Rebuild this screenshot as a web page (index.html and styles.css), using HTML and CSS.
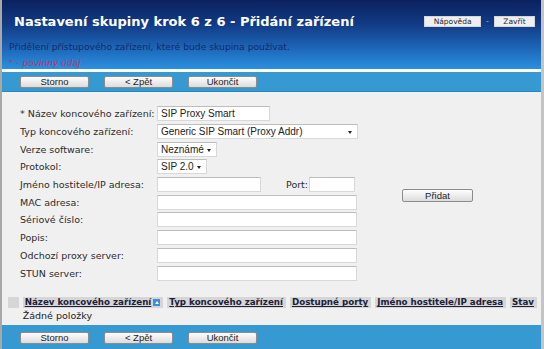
FILE: index.html
```html
<!DOCTYPE html>
<html lang="cs">

<head>
    <meta charset="UTF-8" />
    <title>Nastavení skupiny krok 6 z 6</title>
    <link rel="stylesheet" href="styles.css">
</head>

<body>
    <div class="page">
        <!-- Wizard header -->
        <div class="head">
            <div class="head-top">
                <h1>Nastavení skupiny krok 6 z 6 - Přidání zařízení</h1>
                <div class="head-links">
                    <button class="link-btn">Nápověda</button>
                    <span class="sep">-</span>
                    <button class="link-btn">Zavřít</button>
                </div>
            </div>
            <p class="intro">Přidělení přístupového zařízení, které bude skupina používat.</p>
            <p class="req">* - povinný údaj</p>
        </div>

        <!-- Navigation bar -->
        <div class="toolbar">
            <button class="btn">Storno</button>
            <button class="btn">&lt; Zpět</button>
            <button class="btn">Ukončit</button>
        </div>

        <div class="content">
            <div class="form-wrap">
                <div class="form-grid">
                    <label>* Název koncového zařízení:</label>
                    <div class="field"><input class="inp w-name" type="text" value="SIP Proxy Smart"></div>

                    <label>Typ koncového zařízení:</label>
                    <div class="field"><span class="sel w-type">Generic SIP Smart (Proxy Addr)</span></div>

                    <label>Verze software:</label>
                    <div class="field"><span class="sel w-ver">Neznámé</span></div>

                    <label>Protokol:</label>
                    <div class="field"><span class="sel w-proto">SIP 2.0</span></div>

                    <label>Jméno hostitele/IP adresa:</label>
                    <div class="field">
                        <input class="inp w-host" type="text">
                        <span class="port-label">Port:</span>
                        <input class="inp w-port" type="text">
                    </div>

                    <label>MAC adresa:</label>
                    <div class="field"><input class="inp w-full" type="text"></div>

                    <label>Sériové číslo:</label>
                    <div class="field"><input class="inp w-full" type="text"></div>

                    <label>Popis:</label>
                    <div class="field"><input class="inp w-full" type="text"></div>

                    <label>Odchozí proxy server:</label>
                    <div class="field"><input class="inp w-full" type="text"></div>

                    <label>STUN server:</label>
                    <div class="field"><input class="inp w-full" type="text"></div>
                </div>

                <div class="add-col">
                    <button class="btn add">Přidat</button>
                </div>
            </div>

            <!-- Assigned devices -->
            <table class="list">
                <thead>
                    <tr>
                        <th class="blank"></th>
                        <th class="c-name"><a>Název koncového zařízení</a><span class="sort"></span></th>
                        <th class="c-type"><a>Typ koncového zařízení</a></th>
                        <th class="c-ports"><a>Dostupné porty</a></th>
                        <th class="c-host"><a>Jméno hostitele/IP adresa</a></th>
                        <th class="c-state"><a>Stav</a></th>
                    </tr>
                </thead>
                <tbody>
                    <tr>
                        <td></td>
                        <td colspan="5" class="empty">Žádné položky</td>
                    </tr>
                </tbody>
            </table>
        </div>

        <div class="toolbar bottom">
            <button class="btn">Storno</button>
            <button class="btn">&lt; Zpět</button>
            <button class="btn">Ukončit</button>
        </div>
    </div>
</body>

</html>
```

FILE: styles.css
```css
/* General styling */
body {
    margin: 0;
    font-family: "DejaVu Sans", Verdana, sans-serif;
    background-color: #f1f0f0;
}

.page {
    width: 544px;
    height: 349px;
    box-sizing: border-box;
    border-left: 2px solid #a8a8a8;
    border-right: 3px solid #c4c4c4;
    display: flex;
    flex-direction: column;
    overflow: hidden;
}

/* Header */
.head {
    height: 72px;
    box-sizing: border-box;
    padding: 0 0 0 8px;
    background: linear-gradient(to bottom, #0b215e 0%, #123b85 35%, #1d66b8 70%, #2b90df 100%);
    border-bottom: 3px solid #ffffff;
}

.head-top {
    display: flex;
    align-items: center;
    justify-content: space-between;
    padding: 14px 6px 0 4px;
}

h1 {
    margin: 0;
    font-size: 13px;
    font-weight: bold;
    color: #ffffff;
}

.head-links {
    display: flex;
    align-items: center;
    gap: 5px;
}

.link-btn {
    height: 11px;
    padding: 0;
    font-family: "DejaVu Sans", sans-serif;
    font-size: 7.5px;
    line-height: 9px;
    color: #2a2a2a;
    background-color: #efefef;
    border: 1px solid #d6d6d6;
    border-radius: 0;
}

.link-btn:first-child {
    width: 57px;
}

.link-btn:last-child {
    width: 41px;
}

.sep {
    font-size: 8px;
    color: #8aa6c6;
}

.intro {
    margin: 12px 0 0 -1px;
    font-size: 9.2px;
    color: #14296a;
}

.req {
    margin: 6px 0 0 -1px;
    font-size: 9px;
    font-style: italic;
    color: #bc3470;
}

/* Button bars */
.toolbar {
    height: 20px;
    box-sizing: border-box;
    display: flex;
    align-items: center;
    gap: 15px;
    padding: 0 0 0 18px;
    background-color: #3699d2;
    border-bottom: 1px solid #2b86bd;
}

.toolbar.bottom {
    height: 24px;
    padding-top: 2px;
    border-bottom: none;
}

.btn {
    width: 69px;
    height: 12px;
    padding: 0;
    font-family: "Liberation Sans", Arial, sans-serif;
    font-size: 9.5px;
    line-height: 10px;
    color: #1e1e1e;
    background: linear-gradient(to bottom, #fdfdfd, #dcdcdc);
    border: 1px solid #8c8c8c;
    border-radius: 2px;
}

/* Form */
.content {
    flex: 1;
    padding-top: 13px;
}

.form-wrap {
    display: flex;
    align-items: center;
}

.form-grid {
    display: grid;
    grid-template-columns: 137px 201px;
    grid-auto-rows: 17.7px;
    align-items: center;
    padding-left: 18px;
}

label {
    font-size: 9.5px;
    color: #2b2b2b;
    white-space: nowrap;
}

.field {
    display: flex;
    align-items: center;
}

.inp,
.sel {
    height: 15px;
    box-sizing: border-box;
    padding: 0 3px;
    font-family: "Liberation Sans", Arial, sans-serif;
    font-size: 10px;
    color: #222;
    background-color: #ffffff;
    border: 1px solid #d8d8d8;
    border-top-color: #bdbdbd;
}

.sel {
    position: relative;
    display: inline-flex;
    align-items: center;
    padding-right: 12px;
    white-space: nowrap;
}

.sel::after {
    content: "";
    position: absolute;
    right: 5px;
    top: 6px;
    border-left: 2.5px solid transparent;
    border-right: 2.5px solid transparent;
    border-top: 3px solid #222;
}

.w-name { width: 113px; }
.w-type { width: 203px; }
.w-ver { width: 60px; }
.w-proto { width: 50px; }
.w-host { width: 104px; }
.w-port { width: 46px; }
.w-full { width: 200px; }

.port-label {
    margin: 0 1px 0 25px;
    font-size: 9.5px;
    color: #2b2b2b;
}

.add-col {
    padding-left: 44px;
}

.btn.add {
    width: 71px;
    height: 13px;
}

/* Device list */
.list {
    margin: 15px 0 0 2px;
    border-collapse: separate;
    border-spacing: 4px 0;
    font-size: 8.7px;
}

.list th {
    height: 11px;
    padding: 0 3px 0 2px;
    text-align: left;
    white-space: nowrap;
    background-color: #d6d6d6;
}

.list th a {
    font-weight: bold;
    color: #20203a;
    text-decoration: underline;
}

.list th.blank {
    width: 14px;
    padding: 0;
}

.sort {
    display: inline-block;
    width: 7px;
    height: 7px;
    margin-left: 2px;
    vertical-align: -1px;
    background-color: #3b8fd6;
    position: relative;
}

.sort::after {
    content: "";
    position: absolute;
    left: 1.5px;
    top: 2px;
    border-left: 2px solid transparent;
    border-right: 2px solid transparent;
    border-bottom: 3px solid #ffffff;
}

.list td.empty {
    padding: 2px 0 0;
    font-size: 9.5px;
    color: #222;
}
```
